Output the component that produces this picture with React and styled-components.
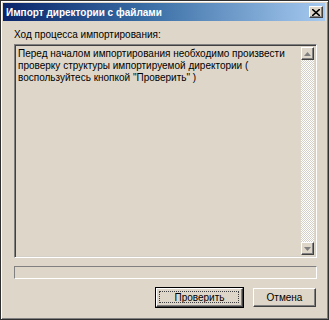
import React from 'react';
import styled, {createGlobalStyle} from 'styled-components';

const Global = createGlobalStyle`
  html, body { margin: 0; padding: 0; background: #ffffff; }
  * { box-sizing: border-box; }
`;

const face = '#ded7c9';

const Win = styled.div`
  width: 329px;
  height: 320px;
  background: ${face};
  border: 1px solid #303030;
  box-shadow: inset 1px 1px 0 #ffffff, inset -1px -1px 0 #808080;
  padding: 2px 3px 3px 2px;
  display: flex;
  flex-direction: column;
  font-family: "Liberation Sans", Arial, sans-serif;
`;

const TitleBar = styled.div`
  height: 18px;
  display: flex;
  align-items: center;
  justify-content: space-between;
  padding: 0 2px 0 3px;
  background: linear-gradient(to right, #0a246a 0%, #3a6ea5 45%, #a6caf0 100%);
`;

const Title = styled.span`
  color: #ffffff;
  font-weight: bold;
  font-size: 10px;
  white-space: nowrap;
`;

const CloseBtn = styled.div`
  width: 14px;
  height: 12px;
  background: ${face};
  border: 1px solid;
  border-color: #ffffff #404040 #404040 #ffffff;
  box-shadow: inset -1px -1px 0 #808080;
  display: flex;
  align-items: center;
  justify-content: center;
`;

const Body = styled.div`
  flex: 1;
  display: flex;
  flex-direction: column;
  padding: 8px 8px 0 11px;
`;

const Label = styled.div`
  font-size: 10px;
  color: #000;
  line-height: 12px;
  height: 15px;
`;

const Memo = styled.div`
  height: 214px;
  display: flex;
  border: 1px solid;
  border-color: #808080 #ffffff #ffffff #808080;
  box-shadow: inset 1px 1px 0 #404040, inset -1px -1px 0 #d4d0c8;
  padding: 2px;
`;

const MemoText = styled.div`
  flex: 1;
  font-size: 10px;
  line-height: 12px;
  color: #000;
  padding: 1px 2px 0 1px;
`;

const Scroll = styled.div`
  width: 13px;
  display: flex;
  flex-direction: column;
  background-color: #f0ede6;
  background-image: repeating-conic-gradient(#ffffff 0 25%, #d4d0c8 0 50%);
  background-size: 2px 2px;
`;

const Arrow = styled.div`
  height: 13px;
  background: ${face};
  border: 1px solid;
  border-color: #ffffff #404040 #404040 #ffffff;
  box-shadow: inset -1px -1px 0 #808080;
  display: flex;
  align-items: center;
  justify-content: center;
`;

const Track = styled.div`
  flex: 1;
`;

const Progress = styled.div`
  height: 13px;
  margin-top: 8px;
  border: 1px solid;
  border-color: #808080 #ffffff #ffffff #808080;
`;

const Buttons = styled.div`
  display: flex;
  justify-content: flex-end;
  gap: 10px;
  margin-top: 9px;
  padding-right: 1px;
`;

const Btn = styled.div`
  width: ${({w}) => w}px;
  height: 19px;
  background: ${face};
  border: 1px solid;
  border-color: #ffffff #404040 #404040 #ffffff;
  box-shadow: inset -1px -1px 0 #808080;
  display: flex;
  align-items: center;
  justify-content: center;
  font-size: 10px;
  color: #000;
  position: relative;
  ${({def}) => def && `
    outline: 1px solid #000;
    &::after {
      content: '';
      position: absolute;
      inset: 2px 3px 3px 2px;
      border: 1px dotted #404040;
    }
  `}
`;

const Tri = ({up}) => (
  <svg width="7" height="4" viewBox="0 0 7 4">
    <path d={up ? 'M3.5 0 L7 4 L0 4 Z' : 'M0 0 L7 0 L3.5 4 Z'} fill="#808080" />
  </svg>
);

export default function App() {
  return (
    <>
      <Global />
      <Win>
        <TitleBar>
          <Title>Импорт директории с файлами</Title>
          <CloseBtn>
            <svg width="8" height="7" viewBox="0 0 8 7">
              <path d="M0 0 L8 7 M8 0 L0 7" stroke="#000" strokeWidth="1.6" />
            </svg>
          </CloseBtn>
        </TitleBar>
        <Body>
          <Label>Ход процесса импортирования:</Label>
          <Memo>
            <MemoText>
              Перед началом импортирования необходимо произвести проверку структуры импортируемой директории ( воспользуйтесь кнопкой "Проверить" )
            </MemoText>
            <Scroll>
              <Arrow><Tri up /></Arrow>
              <Track />
              <Arrow><Tri /></Arrow>
            </Scroll>
          </Memo>
          <Progress />
          <Buttons>
            <Btn w={87} def>Проверить</Btn>
            <Btn w={63}>Отмена</Btn>
          </Buttons>
        </Body>
      </Win>
    </>
  );
}
